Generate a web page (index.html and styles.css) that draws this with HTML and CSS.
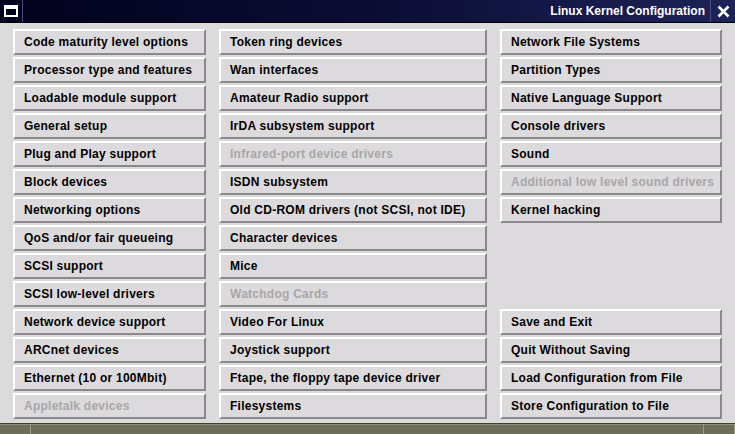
FILE: index.html
```html
<!DOCTYPE html>
<html lang="en">
<head>
  <meta charset="UTF-8">
  <title>Linux Kernel Configuration</title>
  <link rel="stylesheet" href="styles.css">
</head>
<body>
  <div class="window">
    <div class="titlebar">
      <span class="menu-box">
        <svg width="14" height="12" viewBox="0 0 14 12"><rect x="1" y="1" width="12" height="10" fill="none" stroke="#fff" stroke-width="2"/><rect x="1" y="1" width="12" height="3" fill="#fff"/></svg>
      </span>
      <span class="title">Linux Kernel Configuration</span>
      <span class="close-box">
        <svg width="13" height="13" viewBox="0 0 13 13"><path d="M1.5 1.5 L11.5 11.5 M11.5 1.5 L1.5 11.5" stroke="#fff" stroke-width="2.6"/></svg>
      </span>
    </div>

    <div class="menu">
      <div class="col">
        <button class="btn">Code maturity level options</button>
        <button class="btn">Processor type and features</button>
        <button class="btn">Loadable module support</button>
        <button class="btn">General setup</button>
        <button class="btn">Plug and Play support</button>
        <button class="btn">Block devices</button>
        <button class="btn">Networking options</button>
        <button class="btn">QoS and/or fair queueing</button>
        <button class="btn">SCSI support</button>
        <button class="btn">SCSI low-level drivers</button>
        <button class="btn">Network device support</button>
        <button class="btn">ARCnet devices</button>
        <button class="btn">Ethernet (10 or 100Mbit)</button>
        <button class="btn disabled">Appletalk devices</button>
      </div>
      <div class="col">
        <button class="btn">Token ring devices</button>
        <button class="btn">Wan interfaces</button>
        <button class="btn">Amateur Radio support</button>
        <button class="btn">IrDA subsystem support</button>
        <button class="btn disabled">Infrared-port device drivers</button>
        <button class="btn">ISDN subsystem</button>
        <button class="btn">Old CD-ROM drivers (not SCSI, not IDE)</button>
        <button class="btn">Character devices</button>
        <button class="btn">Mice</button>
        <button class="btn disabled">Watchdog Cards</button>
        <button class="btn">Video For Linux</button>
        <button class="btn">Joystick support</button>
        <button class="btn">Ftape, the floppy tape device driver</button>
        <button class="btn">Filesystems</button>
      </div>
      <div class="col">
        <button class="btn">Network File Systems</button>
        <button class="btn">Partition Types</button>
        <button class="btn">Native Language Support</button>
        <button class="btn">Console drivers</button>
        <button class="btn">Sound</button>
        <button class="btn disabled">Additional low level sound drivers</button>
        <button class="btn">Kernel hacking</button>
        <div class="spacer"></div>
        <div class="spacer"></div>
        <div class="spacer"></div>
        <button class="btn">Save and Exit</button>
        <button class="btn">Quit Without Saving</button>
        <button class="btn">Load Configuration from File</button>
        <button class="btn">Store Configuration to File</button>
      </div>
    </div>

    <div class="statusbar">
      <span class="status-cell small"></span>
      <span class="status-cell wide"></span>
      <span class="status-cell small"></span>
    </div>
  </div>
</body>
</html>
```

FILE: styles.css
```css
:root {
  --face: #dcdadc;
  --bg: #dcdadc;
  --light: #ffffff;
  --dark: #8a888a;
  --text: #000000;
  --text-off: #a8a6a8;
}
html, body {
  margin: 0;
  height: 100%;
  overflow: hidden;
}
body {
  font-family: "Liberation Sans", Arial, sans-serif;
  background: var(--bg);
}
.window {
  width: 735px;
  height: 434px;
  display: flex;
  flex-direction: column;
}
.titlebar {
  height: 22px;
  display: flex;
  align-items: stretch;
  background: linear-gradient(to right, #02021e 0%, #0a0c34 50%, #1e2458 100%);
  color: #fff;
  border-bottom: 1px solid #000;
}
.menu-box {
  width: 22px;
  display: flex;
  align-items: center;
  justify-content: center;
  border-right: 1px solid #4a4e7a;
}
.title {
  flex: 1;
  text-align: right;
  font-weight: bold;
  font-size: 12px;
  line-height: 22px;
  padding-right: 5px;
  border-right: 1px solid #4a4e7a;
}
.close-box {
  width: 24px;
  display: flex;
  align-items: center;
  justify-content: center;
}
.menu {
  flex: 1;
  display: grid;
  grid-template-columns: 193px 268px 222px;
  column-gap: 13px;
  padding: 6px 13px 0 13px;
}
.col {
  display: grid;
  grid-template-rows: repeat(14, 26px);
  row-gap: 2px;
}
.btn {
  font-family: inherit;
  font-weight: bold;
  font-size: 12px;
  letter-spacing: 0.25px;
  color: var(--text);
  background: var(--face);
  text-align: left;
  padding: 0 0 0 9px;
  margin: 0;
  border-style: solid;
  border-width: 2px;
  border-color: var(--light) var(--dark) var(--dark) var(--light);
  height: 26px;
  line-height: 20px;
  white-space: nowrap;
}
.btn.disabled {
  color: var(--text-off);
}
.statusbar {
  height: 10px;
  display: flex;
  background: #6c6e5a;
  border-top: 1px solid #3c3e30;
  box-shadow: inset 0 1px 0 #8e907c;
}
.status-cell {
  border-right: 1px solid #9a9c88;
}
.status-cell.small {
  width: 30px;
}
.status-cell.wide {
  flex: 1;
}
```
